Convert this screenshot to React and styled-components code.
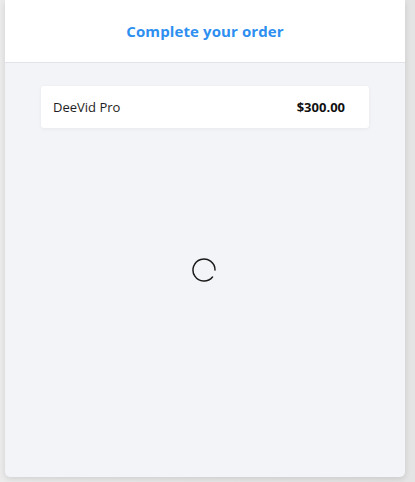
import React from "react";
import styled, { createGlobalStyle, keyframes } from "styled-components";

const Global = createGlobalStyle`
  html, body { margin: 0; padding: 0; background: #e9e9ea; }
  body { font-family: "Open Sans", "Noto Sans", Arial, sans-serif; }
  #root { width: 415px; height: 482px; }
`;

const Page = styled.div`
  width: 415px;
  height: 482px;
  padding: 0 10px 0 5px;
  box-sizing: border-box;
  background: linear-gradient(to right, #ececec, #e4e4e5);
`;

const Card = styled.div`
  width: 400px;
  height: 477px;
  display: flex;
  flex-direction: column;
  background: #f3f4f8;
  border-radius: 0 0 5px 5px;
  box-shadow: 0 2px 6px rgba(0, 0, 0, 0.12);
  overflow: hidden;
`;

const Header = styled.div`
  height: 62px;
  flex: none;
  display: flex;
  align-items: center;
  justify-content: center;
  background: #ffffff;
  border-bottom: 1px solid #e1e3e8;
`;

const Title = styled.h1`
  margin: 0;
  font-size: 15px;
  font-weight: 700;
  color: #2d8ff0;
  letter-spacing: 0.1px;
`;

const Body = styled.div`
  flex: 1;
  display: flex;
  flex-direction: column;
  align-items: center;
  padding-top: 23px;
`;

const Item = styled.div`
  width: 328px;
  height: 42px;
  box-sizing: border-box;
  display: flex;
  align-items: center;
  justify-content: space-between;
  padding: 0 24px 0 12px;
  background: #ffffff;
  border-radius: 3px;
  box-shadow: 0 1px 4px rgba(0, 0, 0, 0.05);
  font-size: 13px;
  color: #1e1e24;
`;

const Name = styled.span`
  font-weight: 400;
`;

const Price = styled.span`
  font-weight: 700;
  color: #111;
`;

const SpinnerWrap = styled.div`
  margin-top: 129px;
  margin-left: -3px;
  width: 26px;
  height: 26px;
`;

function Spinner() {
  return (
    <SpinnerWrap>
      <svg width="26" height="26" viewBox="0 0 26 26">
        <path
          d="M24 13 A11 11 0 1 0 21.5 20"
          fill="none"
          stroke="#1a1a1a"
          strokeWidth="1.5"
          strokeLinecap="round"
        />
      </svg>
    </SpinnerWrap>
  );
}

export default function App() {
  return (
    <>
      <Global />
      <Page>
        <Card>
          <Header>
            <Title>Complete your order</Title>
          </Header>
          <Body>
            <Item>
              <Name>DeeVid Pro</Name>
              <Price>$300.00</Price>
            </Item>
            <Spinner />
          </Body>
        </Card>
      </Page>
    </>
  );
}
